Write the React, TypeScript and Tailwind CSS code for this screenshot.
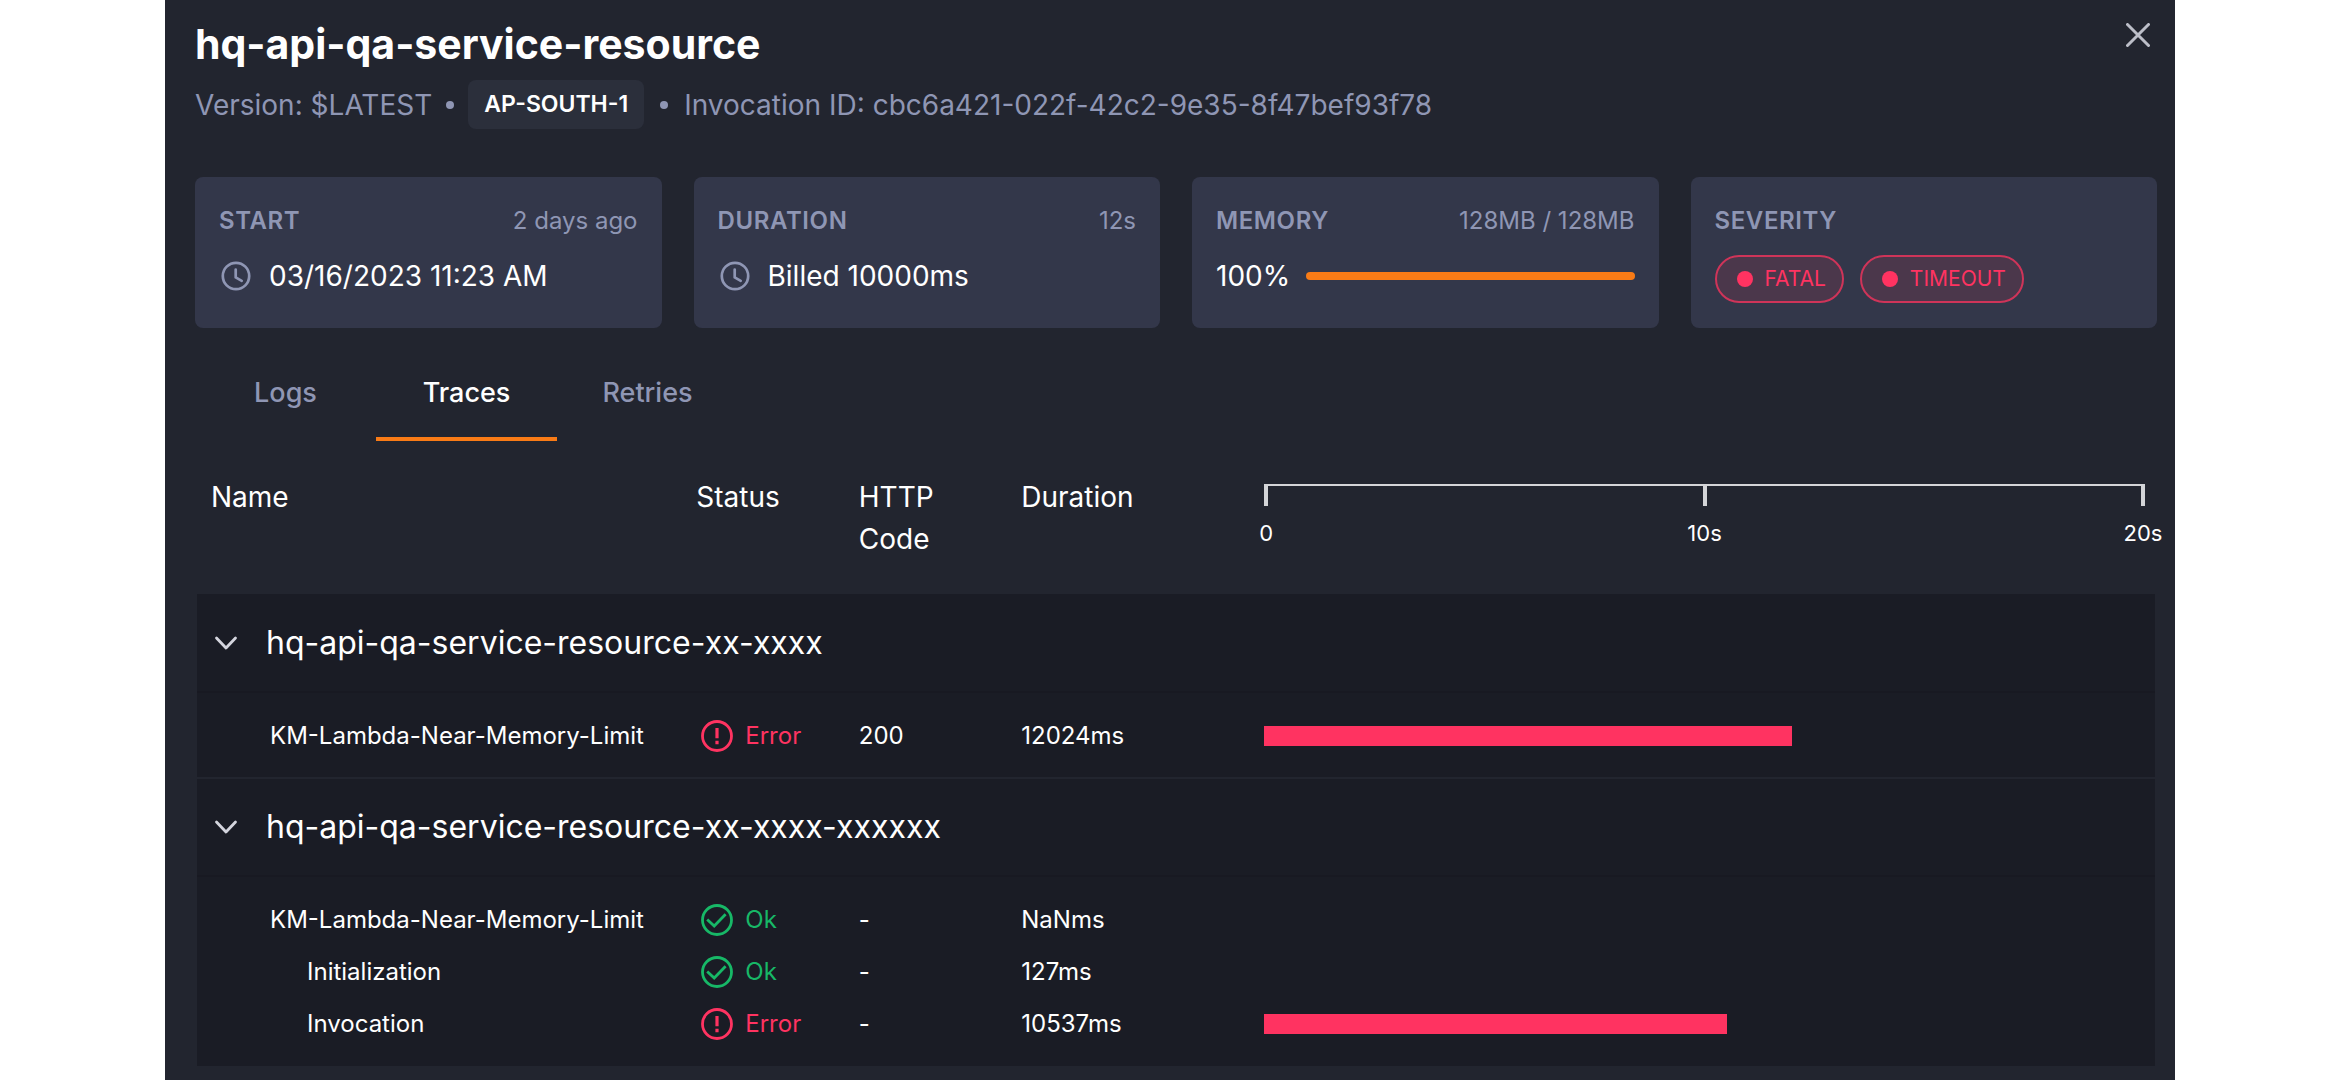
import { useState } from 'react';
import type { ReactNode } from 'react';

type Span = {
  name: string;
  status: 'Ok' | 'Error';
  code: string;
  duration: string;
  ms: number;
  nested?: boolean;
};

type Group = { name: string; spans: Span[] };

const AXIS_MAX = 20000;
const TICKS = ['0', '10s', '20s'];
const TABS = ['Logs', 'Traces', 'Retries'];

const groups: Group[] = [
  {
    name: 'hq-api-qa-service-resource-xx-xxxx',
    spans: [
      { name: 'KM-Lambda-Near-Memory-Limit', status: 'Error', code: '200', duration: '12024ms', ms: 12024 },
    ],
  },
  {
    name: 'hq-api-qa-service-resource-xx-xxxx-xxxxxx',
    spans: [
      { name: 'KM-Lambda-Near-Memory-Limit', status: 'Ok', code: '-', duration: 'NaNms', ms: 0 },
      { name: 'Initialization', status: 'Ok', code: '-', duration: '127ms', ms: 0, nested: true },
      { name: 'Invocation', status: 'Error', code: '-', duration: '10537ms', ms: 10537, nested: true },
    ],
  },
];

function ClockIcon() {
  return (
    <svg viewBox="0 0 32 32" className="w-8 h-8 flex-shrink-0 text-[#8f96b4]" fill="none" stroke="currentColor" strokeWidth="2.7" strokeLinecap="round" strokeLinejoin="round" aria-hidden="true">
      <circle cx="17" cy="16" r="13.2" />
      <path d="M16.7 9.6v7.8l6 3.4" />
    </svg>
  );
}

function StatusIcon({ status }: { status: Span['status'] }) {
  return (
    <svg viewBox="0 0 32 32" className="w-8 h-8 flex-shrink-0" fill="none" stroke="currentColor" strokeWidth="2.8" aria-hidden="true">
      <circle cx="16" cy="16" r="14.5" />
      {status === 'Ok' ? (
        <path d="M6.2 15.4l7 6.6L24.6 10.2" />
      ) : (
        <path d="M16 8v10.2M16 20.8v3.4" strokeWidth="3.2" />
      )}
    </svg>
  );
}

function Card({ title, aside, children }: { title: string; aside?: string; children: ReactNode }) {
  return (
    <section className="flex-1 min-w-0 rounded-lg bg-[#33374a] px-6 pt-[26px] pb-6">
      <div className="flex items-center justify-between text-2xl leading-9 text-[#8f96b4]">
        <h2 className="font-semibold tracking-wide">{title}</h2>
        {aside && <span>{aside}</span>}
      </div>
      <div className="flex items-center mt-[9px] h-14 text-[28px] text-white">{children}</div>
    </section>
  );
}

function Pill({ label }: { label: string }) {
  return (
    <span className="flex items-center gap-3 h-12 pl-5 pr-4 rounded-full border-2 border-[#cf3459] bg-[#4b374b] text-[#ff3361] text-[21px]">
      <span className="w-4 h-4 rounded-full bg-[#ff3361]" />
      {label}
    </span>
  );
}

export default function App() {
  const [tab, setTab] = useState('Traces');
  const [closed, setClosed] = useState<string[]>([]);

  const toggle = (name: string) =>
    setClosed(prev => (prev.includes(name) ? prev.filter(n => n !== name) : [...prev, name]));

  return (
    <div className="min-h-screen bg-white font-['Inter',sans-serif]">
      <main className="max-w-[2010px] min-h-screen mx-auto bg-[#22252f] pl-[30px] pr-[18px] pt-4 pb-3">
        {/* Header */}
        <header className="flex items-start justify-between">
          <div>
            <h1 className="text-[41px] leading-[56px] font-bold text-white">hq-api-qa-service-resource</h1>
            <div className="flex items-center mt-2 text-[28px] text-[#8f96b4]">
              <span>Version: $LATEST</span>
              <span className="w-9 flex justify-center"><i className="w-2 h-2 rounded-full bg-[#8f96b4]" /></span>
              <span className="h-[49px] px-4 flex items-center rounded-lg bg-[#2b2f3b] text-white text-[23px] font-semibold">AP-SOUTH-1</span>
              <span className="w-10 flex justify-center"><i className="w-2 h-2 rounded-full bg-[#8f96b4]" /></span>
              <span>Invocation ID: cbc6a421-022f-42c2-9e35-8f47bef93f78</span>
            </div>
          </div>
          <button type="button" aria-label="Close" className="p-1 mt-[3px] mr-[3px] text-[#bcbec8]">
            <svg viewBox="0 0 24 24" className="w-6 h-6" fill="none" stroke="currentColor" strokeWidth="3" strokeLinecap="round" aria-hidden="true">
              <path d="M1.5 1.5l21 21M22.5 1.5l-21 21" />
            </svg>
          </button>
        </header>

        {/* Summary cards */}
        <div className="flex gap-8 mt-12">
          <Card title="START" aside="2 days ago">
            <ClockIcon />
            <span className="ml-[18px]">03/16/2023 11:23 AM</span>
          </Card>
          <Card title="DURATION" aside="12s">
            <ClockIcon />
            <span className="ml-[18px]">Billed 10000ms</span>
          </Card>
          <Card title="MEMORY" aside="128MB / 128MB">
            <span>100%</span>
            <span className="flex-1 h-2 ml-4 rounded-full bg-[#f97b16]" />
          </Card>
          <Card title="SEVERITY">
            <div className="flex gap-4 pt-[6px]">
              <Pill label="FATAL" />
              <Pill label="TIMEOUT" />
            </div>
          </Card>
        </div>

        {/* Tabs */}
        <div role="tablist" className="flex mt-[33px]">
          {TABS.map(t => (
            <button
              key={t}
              type="button"
              role="tab"
              aria-selected={tab === t}
              onClick={() => setTab(t)}
              className={`w-[181px] h-20 pb-3 border-b-4 text-[27px] font-medium ${
                tab === t ? 'border-[#f97b16] text-white' : 'border-transparent text-[#8f96b4]'
              }`}
            >
              {t}
            </button>
          ))}
        </div>

        {/* Traces */}
        <div className="px-[2px] mt-[35px]">
          <table className="w-full table-fixed border-collapse text-left text-white">
            <colgroup>
              <col className="w-[25.5%]" />
              <col className="w-[8.3%]" />
              <col className="w-[8.3%]" />
              <col className="w-[12.4%]" />
              <col />
            </colgroup>
            <thead>
              <tr className="h-[118px] align-top text-[28px] leading-[42px]">
                <th className="font-normal pl-[14px]">Name</th>
                <th className="font-normal">Status</th>
                <th className="font-normal pr-10">HTTP Code</th>
                <th className="font-normal">Duration</th>
                <th className="font-normal pr-[10px] pt-2" aria-label="Timeline">
                  <div className="flex justify-between border-t-2 border-[#d4d5d8]">
                    {TICKS.map(t => (
                      <div key={t} className="w-1 flex flex-col items-center">
                        <span className="w-1 h-5 bg-[#d4d5d8]" />
                        <span className="mt-[11px] text-[22px] leading-8 whitespace-nowrap">{t}</span>
                      </div>
                    ))}
                  </div>
                </th>
              </tr>
            </thead>
            {groups.map((g, gi) => (
              <tbody key={g.name} className={`bg-[#1a1c25] ${gi > 0 ? 'border-t-2 border-[#22252f]' : ''}`}>
                <tr className="border-b-2 border-[#181922]">
                  <th colSpan={5} className="h-[98px] p-0 font-normal">
                    <button
                      type="button"
                      aria-expanded={!closed.includes(g.name)}
                      onClick={() => toggle(g.name)}
                      className="flex items-center pl-[17px] text-[32px]"
                    >
                      <svg viewBox="0 0 24 24" className="w-6 h-6 text-[#d4d5de]" fill="none" stroke="currentColor" strokeWidth="2.8" strokeLinecap="round" strokeLinejoin="round" aria-hidden="true">
                        <path d="M2.5 7l9.5 10 9.5-10" />
                      </svg>
                      <span className="ml-7">{g.name}</span>
                    </button>
                  </th>
                </tr>
                {!closed.includes(g.name) && (
                  <>
                    <tr aria-hidden="true"><td colSpan={5} className="h-[18px] p-0" /></tr>
                    {g.spans.map(s => (
                      <tr key={s.name} className="h-[52px] text-2xl">
                        <td className={`p-0 ${s.nested ? 'pl-[110px]' : 'pl-[73px]'}`}>{s.name}</td>
                        <td className="p-0">
                          <span className={`flex items-center gap-3 pl-[5px] ${s.status === 'Ok' ? 'text-[#17b867]' : 'text-[#ff3361]'}`}>
                            <StatusIcon status={s.status} />
                            {s.status}
                          </span>
                        </td>
                        <td className="p-0">{s.code}</td>
                        <td className="p-0">{s.duration}</td>
                        <td className="p-0 pr-3">
                          {s.ms > 0 && (
                            <div className="h-5 bg-[#ff3361]" style={{ width: `${(s.ms / AXIS_MAX) * 100}%` }} />
                          )}
                        </td>
                      </tr>
                    ))}
                    <tr aria-hidden="true"><td colSpan={5} className="h-4 p-0" /></tr>
                  </>
                )}
              </tbody>
            ))}
          </table>
        </div>
      </main>
    </div>
  );
}
